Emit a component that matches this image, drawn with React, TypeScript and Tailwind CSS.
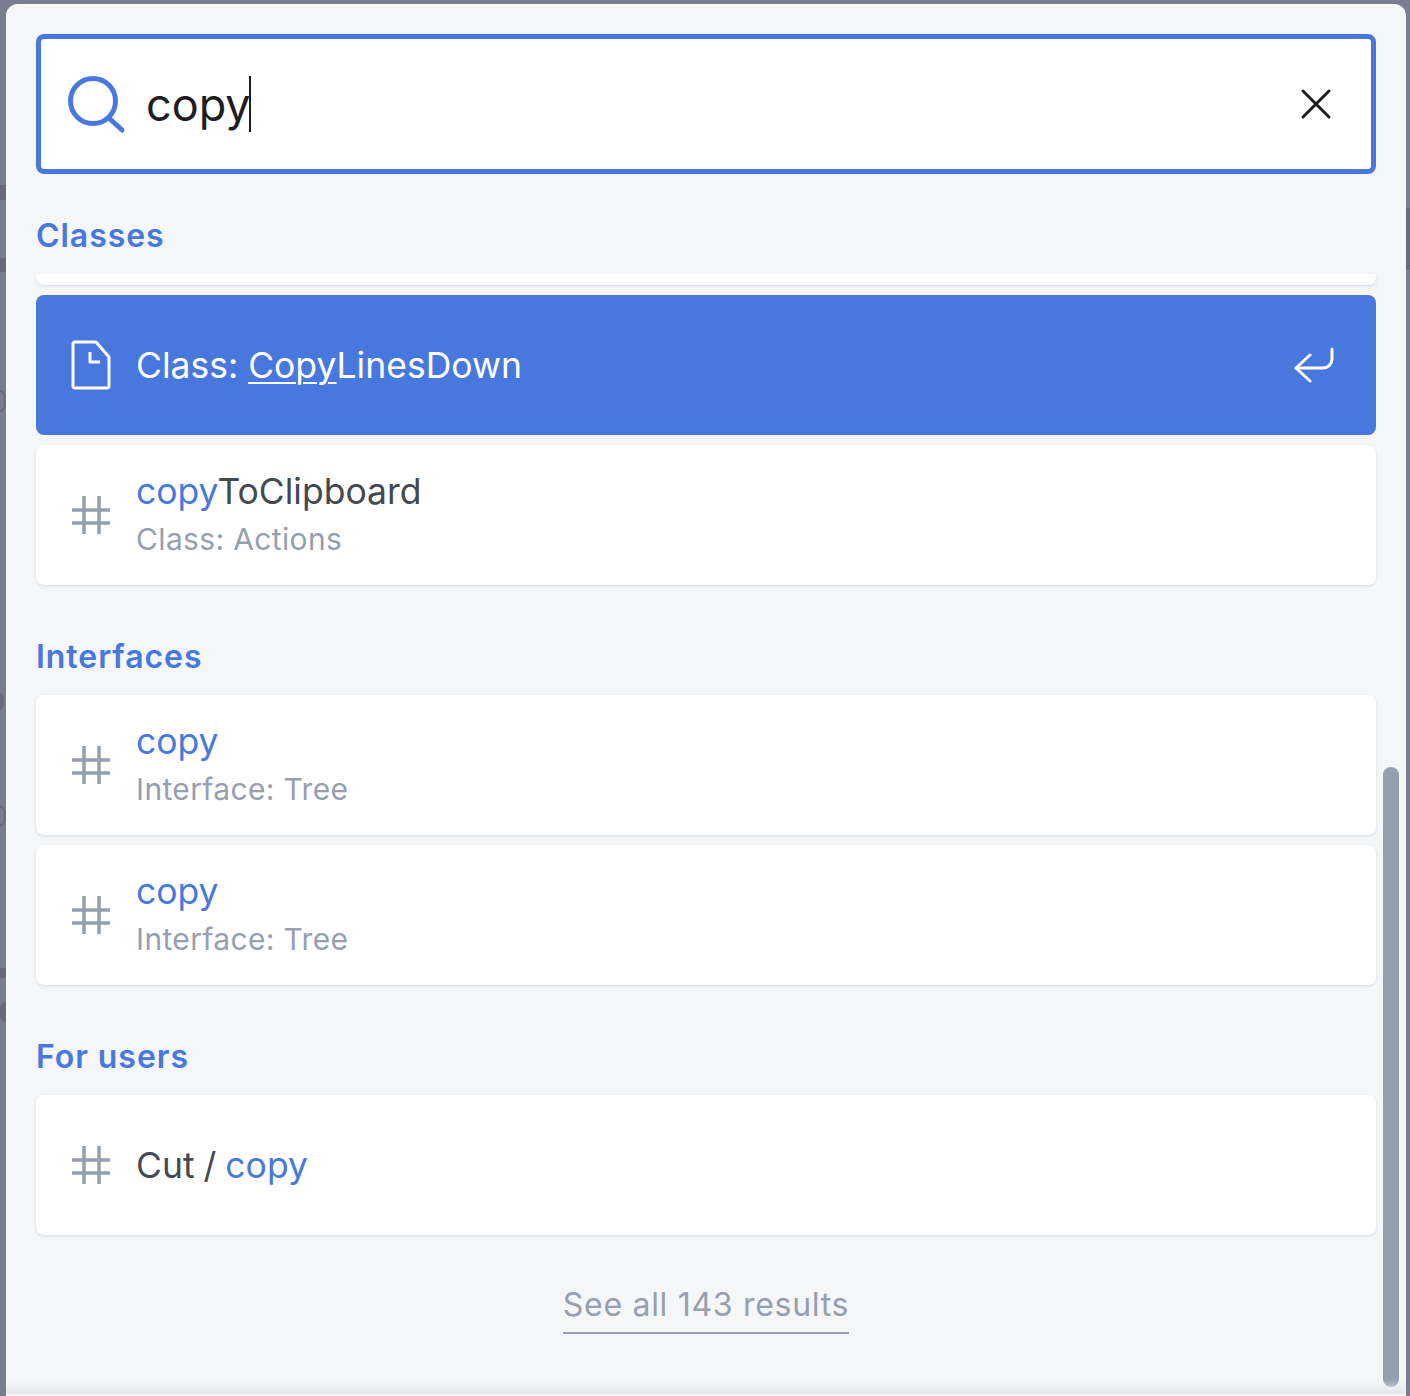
const font = { fontFamily: "Inter, 'Noto Sans', sans-serif" };

function HashIcon() {
  return (
    <svg width="40" height="40" viewBox="0 0 40 40" fill="none" stroke="#969faf" strokeWidth="3.5" className="shrink-0">
      <path d="M13 1v38M28 1v38M1 15h38M1 28h38" />
    </svg>
  );
}

function FileIcon() {
  return (
    <svg width="40" height="50" viewBox="0 0 40 50" fill="none" stroke="#fff" strokeWidth="3" strokeLinejoin="round" className="shrink-0">
      <path d="M4 2h21l13 15v29a2 2 0 0 1-2 2H4a2 2 0 0 1-2-2V4a2 2 0 0 1 2-2z" />
      <path d="M19 12v10h10" />
    </svg>
  );
}

function EnterIcon() {
  return (
    <svg width="40" height="36" viewBox="0 0 40 36" fill="none" stroke="#fff" strokeWidth="3" strokeLinecap="round" strokeLinejoin="round" className="shrink-0">
      <path d="M38 2v10a9 9 0 0 1-9 9H2" />
      <path d="M16 8L2 21l14 13" />
    </svg>
  );
}

function GroupLabel({ children, className }: { children: string; className: string }) {
  return <div className={`text-[32px] leading-[34px] font-semibold tracking-[0.95px] text-[#4878de] ${className}`}>{children}</div>;
}

function HitCard({ title, sub }: { title: React.ReactNode; sub?: string }) {
  return (
    <div className="flex items-center h-[140px] bg-white rounded-lg pl-[35px] shadow-[0_1px_3px_0_#d4d9e1]">
      <HashIcon />
      <div className={`ml-[25px] ${sub ? "pb-[2px]" : "pt-[2px]"}`}>
        <div className="text-[35.5px] leading-[44px] [word-spacing:-1px] text-[#444950]">{title}</div>
        {sub && <div className="text-[30px] leading-[40px] mt-[5px] tracking-[0.35px] text-[#969faf]">{sub}</div>}
      </div>
    </div>
  );
}

export default function App() {
  const mark = <span className="text-[#4878de]">copy</span>;

  return (
    <div className="relative w-[1410px] h-[1396px] overflow-hidden bg-[#7a7c90]" style={font}>
      {/* bits of the page behind the modal */}
      <div className="absolute left-0 top-[185px] w-[6px] h-[15px] bg-[#696b7d]" />
      <div className="absolute left-0 top-[258px] w-[6px] h-[14px] bg-[#696b7d]" />
      <div className="absolute left-0 top-[968px] w-[6px] h-[10px] bg-[#696b7d]" />
      <div className="absolute left-[-8px] top-[390px] w-[14px] h-[22px] rounded-full border-2 border-[#696b7d]" />
      <div className="absolute left-[-8px] top-[692px] w-[12px] h-[18px] rounded-full bg-[#696b7d]" />
      <div className="absolute left-[-12px] top-[805px] w-[18px] h-[22px] rounded-full border-2 border-[#696b7d]" />
      <div className="absolute left-0 top-[1002px] w-[6px] h-[20px] rounded-l-full bg-[#696b7d]" />
      <div className="absolute right-0 top-[208px] w-[4px] h-[62px] bg-[#696b7d]" />

      <div className="relative ml-[6px] mt-[4px] w-[1400px] h-[1392px] rounded-t-[12px] bg-[#f4f6f8] pt-[30px] px-[30px] shadow-[inset_1px_1px_0_0_rgba(255,255,255,0.5)]">
        <div className="flex items-center h-[140px] border-[5px] border-[#4878de] rounded-lg bg-white pl-[25px] pr-[39px]">
          <svg width="60" height="60" viewBox="0 0 60 60" fill="none" stroke="#4878de" strokeWidth="5" strokeLinecap="round" className="shrink-0">
            <circle cx="27" cy="27" r="22.5" />
            <path d="M44 45l12 11" />
          </svg>
          <div className="flex items-center ml-[20px] text-[45px] leading-[56px] text-[#1c1e21]">
            <span className="translate-y-[1px]">copy</span>
            <span className="w-[2px] h-[56px] -ml-[2px] bg-[#1c1e21]" />
          </div>
          <svg width="32" height="32" viewBox="0 0 32 32" fill="none" stroke="#1c1e21" strokeWidth="3" strokeLinecap="round" className="ml-auto shrink-0">
            <path d="M3 3l26 26M29 3L3 29" />
          </svg>
        </div>

        <GroupLabel className="pt-[45px] pb-[21px]">Classes</GroupLabel>
        <div className="h-[11px] overflow-hidden rounded-b-lg bg-white shadow-[0_1px_3px_0_#d4d9e1] mb-[10px]" />

        <div className="flex items-center h-[140px] rounded-lg bg-[#4878de] pl-[35px] pr-[42px] text-white">
          <FileIcon />
          <div className="ml-[25px] pt-[2px] text-[35.5px] leading-[44px]">
            Class: <span className="underline decoration-2 underline-offset-[4px]">Copy</span>LinesDown
          </div>
          <div className="ml-auto">
            <EnterIcon />
          </div>
        </div>

        <div className="mt-[10px]">
          <HitCard title={<>{mark}ToClipboard</>} sub="Class: Actions" />
        </div>

        <GroupLabel className="pt-[55px] pb-[21px]">Interfaces</GroupLabel>
        <div className="flex flex-col gap-[10px]">
          <HitCard title={mark} sub="Interface: Tree" />
          <HitCard title={mark} sub="Interface: Tree" />
        </div>

        <GroupLabel className="pt-[55px] pb-[21px]">For users</GroupLabel>
        <HitCard title={<>Cut / {mark}</>} />

        <div className="flex justify-center pt-[49px]">
          <span className="text-[32px] leading-[42px] pb-[6px] tracking-[0.7px] border-b-2 border-[#969faf] text-[#969faf]">See all 143 results</span>
        </div>

        {/* scrollbar */}
        <div className="absolute left-[1377px] top-[763px] w-[16px] h-[620px] rounded-full bg-[#969faf]" />
        <div className="absolute left-0 right-0 bottom-[2px] h-[14px] bg-gradient-to-b from-transparent to-[#e6e8ee]" />
      </div>
    </div>
  );
}
